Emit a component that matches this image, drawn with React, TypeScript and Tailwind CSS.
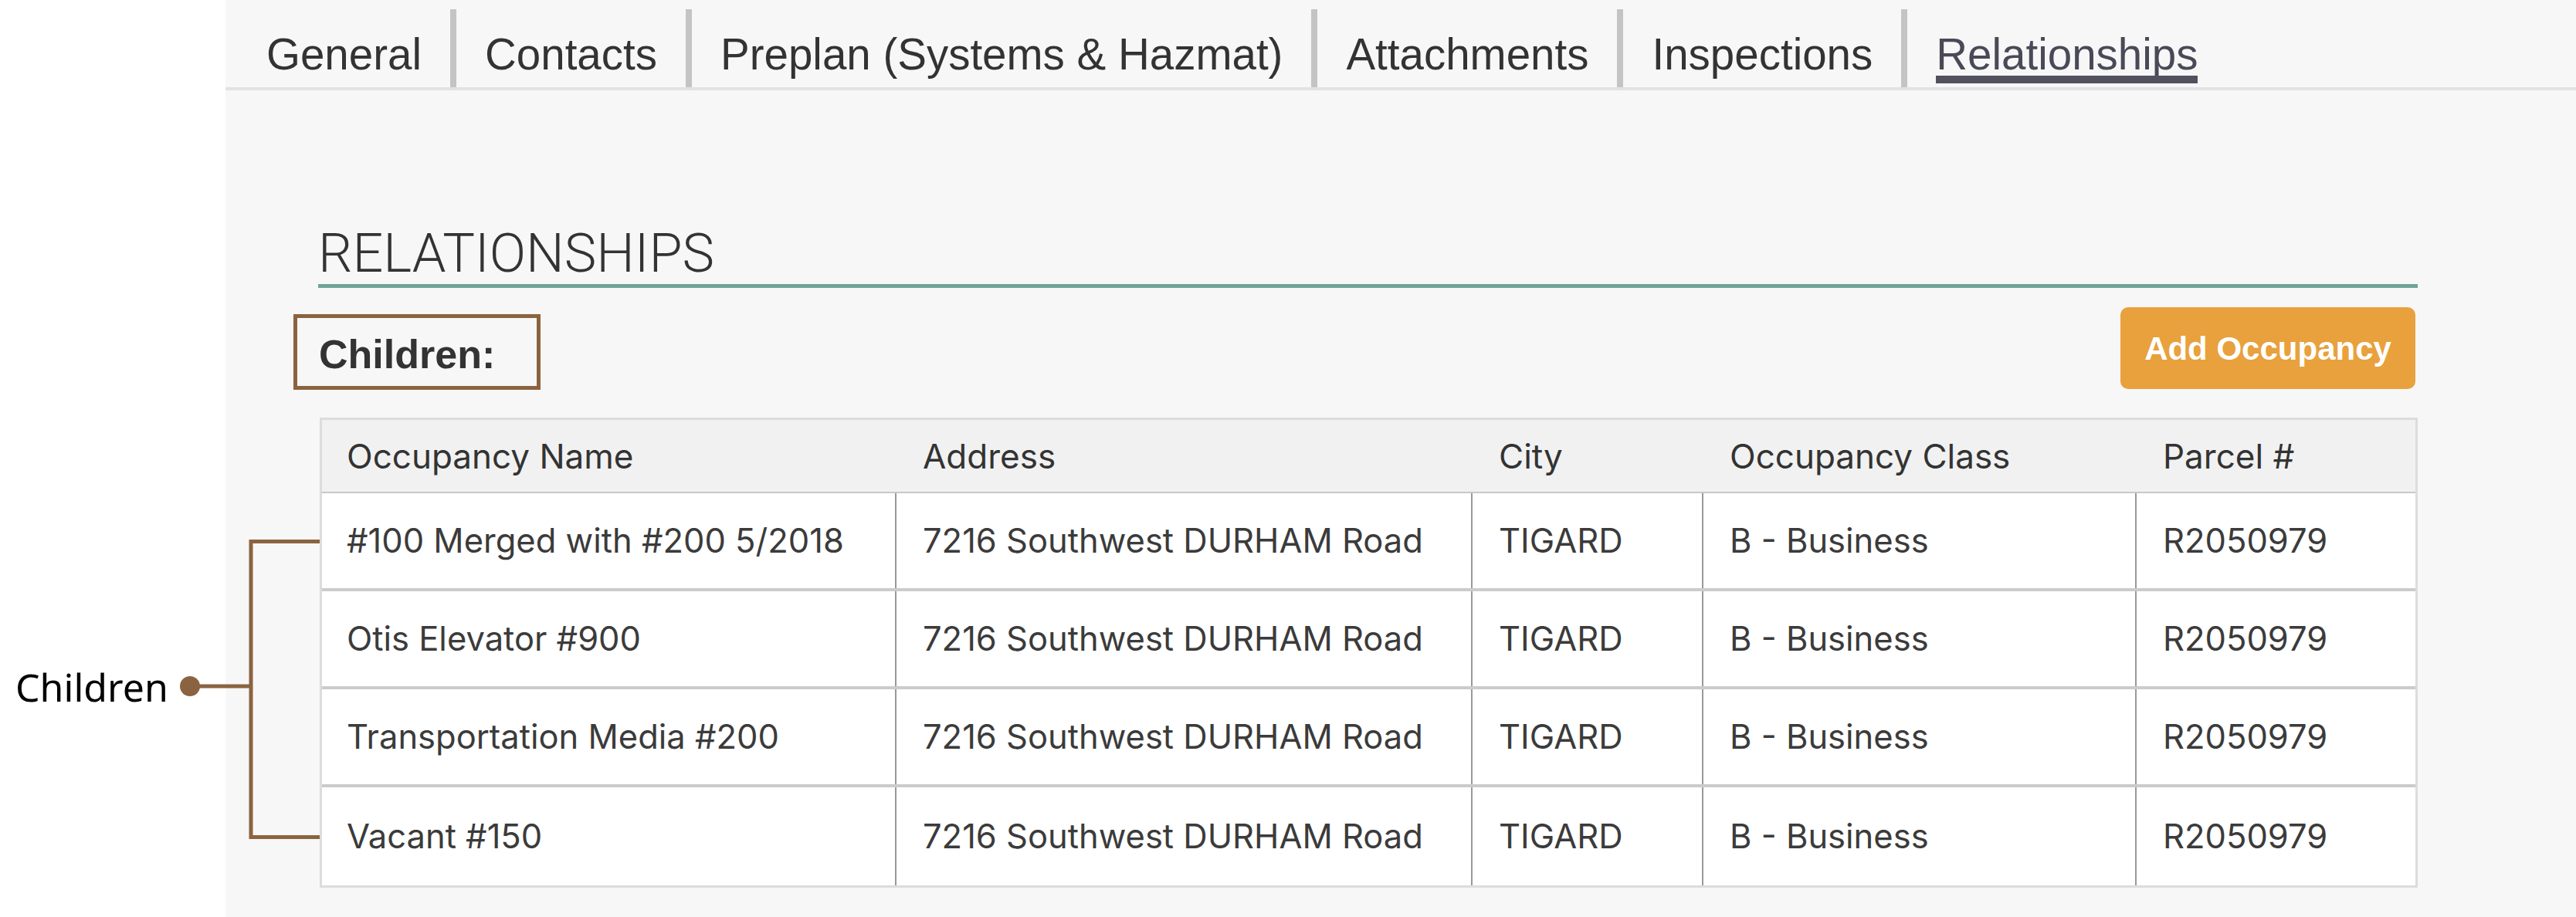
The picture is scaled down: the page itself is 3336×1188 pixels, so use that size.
import React from 'react';

const TABS = ['General', 'Contacts', 'Preplan (Systems & Hazmat)', 'Attachments', 'Inspections', 'Relationships'];

const COLUMNS = ['Occupancy Name', 'Address', 'City', 'Occupancy Class', 'Parcel #'];

const CHILDREN: string[][] = [
  ['#100 Merged with #200 5/2018', '7216 Southwest DURHAM Road', 'TIGARD', 'B - Business', 'R2050979'],
  ['Otis Elevator #900', '7216 Southwest DURHAM Road', 'TIGARD', 'B - Business', 'R2050979'],
  ['Transportation Media #200', '7216 Southwest DURHAM Road', 'TIGARD', 'B - Business', 'R2050979'],
  ['Vacant #150', '7216 Southwest DURHAM Road', 'TIGARD', 'B - Business', 'R2050979'],
];

const GRID = 'grid grid-cols-[742px_746px_299px_561px_1fr]';

function Tabs() {
  return (
    <div className="flex h-[117px] items-end border-b-4 border-[#e2e2e2] pl-[16px] font-['Liberation_Sans',Arial,sans-serif]">
      {TABS.map((tab, i) => {
        const active = tab === 'Relationships';
        return (
          <div
            key={tab}
            className={`flex h-[101px] items-start px-[37px] pt-[27px] ${i > 0 ? 'border-l-8 border-[#c4c4c4]' : ''}`}
          >
            <span
              className={`relative whitespace-nowrap text-[56.5px] leading-[64px] ${active ? 'text-[#4a4957]' : 'text-[#333333]'}`}
            >
              {tab}
              {active && <span className="absolute left-0 right-0 top-[59px] h-[10px] bg-[#52515e]" />}
            </span>
          </div>
        );
      })}
    </div>
  );
}

function ChildrenTable() {
  return (
    <div className="ml-[2px] mt-[36px] border-[3px] border-[#dcdcdc] bg-white font-['Inter',sans-serif]">
      {/* header */}
      <div className={`${GRID} h-[95px] border-b-2 border-[#c8c8c8] bg-[#f1f1f1]`}>
        {COLUMNS.map((col, i) => (
          <div
            key={col}
            className={`flex items-center whitespace-nowrap text-[44px] text-[#333333] ${i === 0 ? 'pl-[32px]' : 'pl-[36px]'}`}
          >
            {col}
          </div>
        ))}
      </div>
      {/* rows */}
      {CHILDREN.map((row, r) => (
        <div
          key={r}
          className={`${GRID} h-[127px] ${r < CHILDREN.length - 1 ? 'border-b-4 border-[#cbcbcb]' : ''}`}
        >
          {row.map((cell, i) => (
            <div
              key={i}
              className={`flex items-center whitespace-nowrap text-[43.5px] text-[#3b3b3b] ${
                i === 0 ? 'pl-[32px]' : 'border-l-2 border-[#999999] pl-[34px]'
              }`}
            >
              {cell}
            </div>
          ))}
        </div>
      ))}
    </div>
  );
}

export default function App() {
  return (
    <div className="relative flex h-[1188px] w-[3336px] overflow-hidden bg-white">
      {/* left gutter */}
      <div className="w-[292px] shrink-0 bg-white" />

      {/* main panel */}
      <div className="flex flex-1 flex-col bg-[#f7f7f7]">
        <Tabs />

        <div className="flex flex-col pl-[120px] pr-[205px] pt-[171px]">
          <h2 className="border-b-[5px] border-[#6fa39a] font-['Roboto',sans-serif] text-[70px] font-light leading-[80px] text-[#333333]">
            RELATIONSHIPS
          </h2>

          <div className="mt-[25px] flex items-start justify-between">
            <div className="-ml-[32px] mt-[9px] h-[98px] w-[320px] border-[5px] border-[#8b6340] pl-[28px] pt-[17px]">
              <span className="font-['Liberation_Sans',Arial,sans-serif] text-[52px] font-bold leading-[60px] text-[#333333]">
                Children:
              </span>
            </div>
            <button className="mr-[3px] h-[106px] w-[382px] rounded-[10px] bg-[#e8a13c] font-['Liberation_Sans',Arial,sans-serif] text-[42px] font-bold text-white">
              Add Occupancy
            </button>
          </div>

          <ChildrenTable />
        </div>
      </div>

      {/* annotation callout */}
      <span className="absolute left-[20px] top-[856px] font-['Noto_Sans',sans-serif] text-[50px] leading-[68px] text-black">
        Children
      </span>
      <svg className="pointer-events-none absolute left-0 top-0" width="420" height="1188" viewBox="0 0 420 1188">
        <circle cx="246" cy="889" r="13" fill="#8b6340" />
        <path d="M246 889H325M325 699V1087M325 701.5H414M325 1084.5H414" stroke="#8b6340" strokeWidth="5" fill="none" />
      </svg>
    </div>
  );
}
